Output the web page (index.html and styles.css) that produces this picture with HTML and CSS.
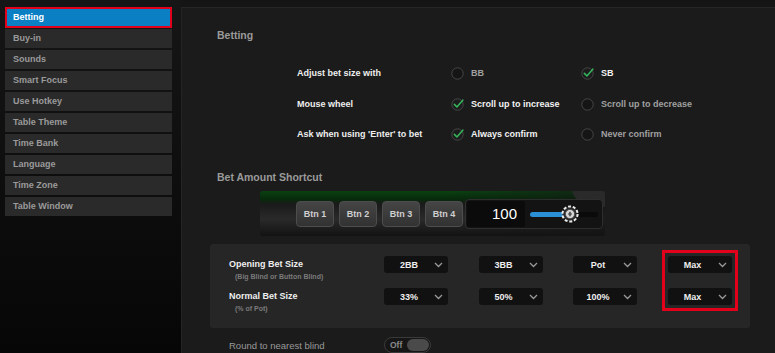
FILE: index.html
```html
<!DOCTYPE html>
<html lang="en">
<head>
  <meta charset="UTF-8">
  <meta name="viewport" content="width=device-width, initial-scale=1.0">
  <title>Settings - Betting</title>
  <link rel="stylesheet" href="styles.css">
</head>
<body>
  <div class="app">
    <nav class="sidebar">
      <div class="menu-item active">Betting</div>
      <div class="menu-item">Buy-in</div>
      <div class="menu-item">Sounds</div>
      <div class="menu-item">Smart Focus</div>
      <div class="menu-item">Use Hotkey</div>
      <div class="menu-item">Table Theme</div>
      <div class="menu-item">Time Bank</div>
      <div class="menu-item">Language</div>
      <div class="menu-item">Time Zone</div>
      <div class="menu-item">Table Window</div>
    </nav>

    <main class="main">
      <div class="section-title">Betting</div>

      <div class="options">
        <div class="option-row">
          <div class="option-label">Adjust bet size with</div>
          <div class="option">
            <svg class="opt-icon" width="14" height="14" viewBox="0 0 14 14"><circle cx="6.5" cy="7.5" r="5.7" fill="#151515" stroke="#474747"/></svg>
            <span>BB</span>
          </div>
          <div class="option on">
            <svg class="opt-icon" width="14" height="14" viewBox="0 0 14 14"><circle cx="6.5" cy="7.5" r="5.7" fill="#1c1c1c" stroke="#474747"/><path d="M3.4 7.4 L5.9 10 L11.8 3.2" fill="none" stroke="#35b45c" stroke-width="1.6" stroke-linecap="round" stroke-linejoin="round"/></svg>
            <span>SB</span>
          </div>
        </div>
        <div class="option-row">
          <div class="option-label">Mouse wheel</div>
          <div class="option on">
            <svg class="opt-icon" width="14" height="14" viewBox="0 0 14 14"><circle cx="6.5" cy="7.5" r="5.7" fill="#1c1c1c" stroke="#474747"/><path d="M3.4 7.4 L5.9 10 L11.8 3.2" fill="none" stroke="#35b45c" stroke-width="1.6" stroke-linecap="round" stroke-linejoin="round"/></svg>
            <span>Scroll up to increase</span>
          </div>
          <div class="option">
            <svg class="opt-icon" width="14" height="14" viewBox="0 0 14 14"><circle cx="6.5" cy="7.5" r="5.7" fill="#151515" stroke="#474747"/></svg>
            <span>Scroll up to decrease</span>
          </div>
        </div>
        <div class="option-row">
          <div class="option-label">Ask when using 'Enter' to bet</div>
          <div class="option on">
            <svg class="opt-icon" width="14" height="14" viewBox="0 0 14 14"><circle cx="6.5" cy="7.5" r="5.7" fill="#1c1c1c" stroke="#474747"/><path d="M3.4 7.4 L5.9 10 L11.8 3.2" fill="none" stroke="#35b45c" stroke-width="1.6" stroke-linecap="round" stroke-linejoin="round"/></svg>
            <span>Always confirm</span>
          </div>
          <div class="option">
            <svg class="opt-icon" width="14" height="14" viewBox="0 0 14 14"><circle cx="6.5" cy="7.5" r="5.7" fill="#151515" stroke="#474747"/></svg>
            <span>Never confirm</span>
          </div>
        </div>
      </div>

      <div class="section-title shortcut-title">Bet Amount Shortcut</div>

      <div class="bet-bar">
        <div class="bet-btn">Btn 1</div>
        <div class="bet-btn">Btn 2</div>
        <div class="bet-btn">Btn 3</div>
        <div class="bet-btn last">Btn 4</div>
        <div class="amount-group">
          <div class="amount-input">100</div>
          <div class="slider">
            <div class="slider-track"><div class="slider-fill"></div></div>
            <svg class="slider-thumb" width="18" height="18" viewBox="0 0 18 18">
              <circle cx="9" cy="9" r="7.6" fill="#2a2a2a" stroke="#eeeeee" stroke-width="2" stroke-dasharray="3 1.8"/>
              <circle cx="9" cy="9" r="4.6" fill="#d6d6d6" stroke="#444" stroke-width="0.8"/>
              <path d="M9 6.3 L11 9 L9 11.7 L7 9 Z" fill="#555"/>
            </svg>
          </div>
        </div>
      </div>

      <div class="size-panel">
        <div class="size-labels">
          <div class="size-label">
            <div class="size-title">Opening Bet Size</div>
            <div class="size-sub">(Big Blind or Button Blind)</div>
          </div>
          <div class="size-label">
            <div class="size-title">Normal Bet Size</div>
            <div class="size-sub">(% of Pot)</div>
          </div>
        </div>
        <div class="size-col">
          <div class="dropdown"><span>2BB</span><svg width="9" height="6" viewBox="0 0 9 6"><polyline points="1,1 4.5,4.5 8,1" fill="none" stroke="#999" stroke-width="1.3"/></svg></div>
          <div class="dropdown"><span>33%</span><svg width="9" height="6" viewBox="0 0 9 6"><polyline points="1,1 4.5,4.5 8,1" fill="none" stroke="#999" stroke-width="1.3"/></svg></div>
        </div>
        <div class="size-col">
          <div class="dropdown"><span>3BB</span><svg width="9" height="6" viewBox="0 0 9 6"><polyline points="1,1 4.5,4.5 8,1" fill="none" stroke="#999" stroke-width="1.3"/></svg></div>
          <div class="dropdown"><span>50%</span><svg width="9" height="6" viewBox="0 0 9 6"><polyline points="1,1 4.5,4.5 8,1" fill="none" stroke="#999" stroke-width="1.3"/></svg></div>
        </div>
        <div class="size-col">
          <div class="dropdown"><span>Pot</span><svg width="9" height="6" viewBox="0 0 9 6"><polyline points="1,1 4.5,4.5 8,1" fill="none" stroke="#999" stroke-width="1.3"/></svg></div>
          <div class="dropdown"><span>100%</span><svg width="9" height="6" viewBox="0 0 9 6"><polyline points="1,1 4.5,4.5 8,1" fill="none" stroke="#999" stroke-width="1.3"/></svg></div>
        </div>
        <div class="size-col highlight">
          <div class="dropdown"><span>Max</span><svg width="9" height="6" viewBox="0 0 9 6"><polyline points="1,1 4.5,4.5 8,1" fill="none" stroke="#999" stroke-width="1.3"/></svg></div>
          <div class="dropdown"><span>Max</span><svg width="9" height="6" viewBox="0 0 9 6"><polyline points="1,1 4.5,4.5 8,1" fill="none" stroke="#999" stroke-width="1.3"/></svg></div>
        </div>
      </div>

      <div class="round-row">
        <div class="round-label">Round to nearest blind</div>
        <div class="toggle">
          <span>Off</span>
          <div class="toggle-knob"></div>
        </div>
      </div>
    </main>
  </div>
</body>
</html>
```

FILE: styles.css
```css
body {
  margin: 0;
  height: 353px;
  overflow: hidden;
  background: #151515;
  font-family: 'Liberation Sans', Arial, sans-serif;
}
.app {
  display: flex;
  height: 353px;
}
.sidebar {
  width: 181px;
  flex: none;
  padding-top: 7px;
  box-sizing: border-box;
  background: linear-gradient(#161616, #060606);
}
.menu-item {
  width: 167px;
  height: 19px;
  margin: 0 0 2px 5px;
  padding-left: 8px;
  box-sizing: border-box;
  background: #2a2a2a;
  color: #9a9a9a;
  font-size: 9px;
  font-weight: bold;
  line-height: 19px;
}
.menu-item.active {
  height: 21px;
  margin-bottom: 1px;
  padding-left: 6px;
  border: 2px solid #e3001b;
  background: #0a7fc3;
  color: #fff;
  line-height: 17px;
}
.main {
  flex: 1;
  margin-top: 7px;
  padding: 20px 0 0 35px;
  background: #1b1b1b;
  border-top: 1px solid #262626;
  border-left: 1px solid #242424;
}
.section-title {
  font-size: 10.5px;
  font-weight: bold;
  color: #9a9a9a;
  line-height: 14px;
}
.options {
  margin: 16px 0 0 80px;
}
.option-row {
  display: flex;
  align-items: center;
  height: 30.5px;
}
.option-label {
  width: 154px;
  font-size: 9px;
  font-weight: bold;
  color: #eee;
}
.option {
  display: flex;
  align-items: center;
  gap: 6px;
  width: 130px;
  font-size: 9px;
  font-weight: bold;
  color: #a0a0a0;
}
.option.on {
  color: #f2f2f2;
}
.opt-icon {
  flex: none;
}
.shortcut-title {
  margin-top: 20.5px;
}
.bet-bar {
  display: flex;
  align-items: center;
  width: 345px;
  height: 45px;
  margin: 7px 0 0 43px;
  padding: 1px 0 0 36px;
  box-sizing: border-box;
  border-radius: 3px;
  background:
    radial-gradient(ellipse 70px 34px at 100% 0%, #2a2a2a 0 45%, transparent 48%),
    linear-gradient(90deg, transparent 55%, rgba(20, 20, 20, 0.6) 100%),
    linear-gradient(180deg, #0b4112 0, #072b0b 8px, #1a1a1a 13px, #2a2a2a 28px, #121212 100%);
}
.bet-btn {
  display: flex;
  align-items: center;
  justify-content: center;
  width: 38px;
  height: 26px;
  margin-right: 5px;
  box-sizing: border-box;
  border: 1px solid #4d4d4d;
  border-radius: 4px;
  background: linear-gradient(#454545, #323232);
  color: #cfcfcf;
  font-size: 9px;
  font-weight: bold;
}
.bet-btn.last {
  margin-right: 2px;
}
.amount-group {
  display: flex;
  align-items: center;
  width: 138px;
  height: 30px;
  padding: 1px;
  box-sizing: border-box;
  border: 1px solid #2e2e2e;
  border-radius: 4px;
  background: #131313;
}
.amount-input {
  width: 58px;
  height: 26px;
  padding-right: 8px;
  box-sizing: border-box;
  background: #0b0b0b;
  border-radius: 2px;
  color: #fff;
  font-size: 15px;
  line-height: 26px;
  text-align: right;
}
.slider {
  position: relative;
  width: 68px;
  height: 18px;
  margin-left: 5px;
}
.slider-track {
  height: 5px;
  margin-top: 6.5px;
  border-radius: 3px;
  background: #0a0a0a;
}
.slider-fill {
  width: 36px;
  height: 5px;
  border-radius: 3px;
  background: #2b8fd6;
}
.slider-thumb {
  position: absolute;
  left: 31px;
  top: 0;
}
.size-panel {
  display: flex;
  width: 540px;
  height: 84px;
  margin: 8px 0 0 -7px;
  padding: 12px 0 0 19px;
  box-sizing: border-box;
  border-radius: 3px;
  background: #262626;
}
.size-labels {
  width: 155px;
  flex: none;
}
.size-label {
  height: 32px;
  padding-top: 3px;
  box-sizing: border-box;
}
.size-title {
  font-size: 9px;
  font-weight: bold;
  color: #eee;
  line-height: 11px;
}
.size-sub {
  margin: 2px 0 0 6px;
  font-size: 7px;
  font-weight: bold;
  color: #7a7a7a;
  line-height: 9px;
}
.size-col {
  display: flex;
  flex-direction: column;
  gap: 15px;
  margin-right: 30.5px;
  align-self: flex-start;
}
.size-col.highlight {
  outline: 3px solid #e3001b;
  outline-offset: 3px;
}
.dropdown {
  display: flex;
  align-items: center;
  width: 64px;
  height: 17px;
  padding: 0 5px 0 4px;
  box-sizing: border-box;
  border-radius: 3px;
  background: #111;
  color: #eee;
  font-size: 9px;
  font-weight: bold;
}
.dropdown span {
  flex: 1;
  text-align: center;
}
.dropdown svg {
  margin-left: 4px;
}
.round-row {
  display: flex;
  align-items: center;
  margin-top: 9px;
  padding-left: 12px;
}
.round-label {
  width: 155px;
  font-size: 9.5px;
  color: #999;
}
.toggle {
  display: flex;
  align-items: center;
  justify-content: space-between;
  width: 47px;
  height: 16px;
  padding: 0 1px 0 5px;
  box-sizing: border-box;
  border: 1px solid #3a3a3a;
  border-radius: 8px;
  background: #161616;
  color: #8a8a8a;
  font-size: 8.5px;
  font-weight: bold;
}
.toggle-knob {
  width: 22px;
  height: 12px;
  border-radius: 7px;
  background: #4a4a4a;
}
```
